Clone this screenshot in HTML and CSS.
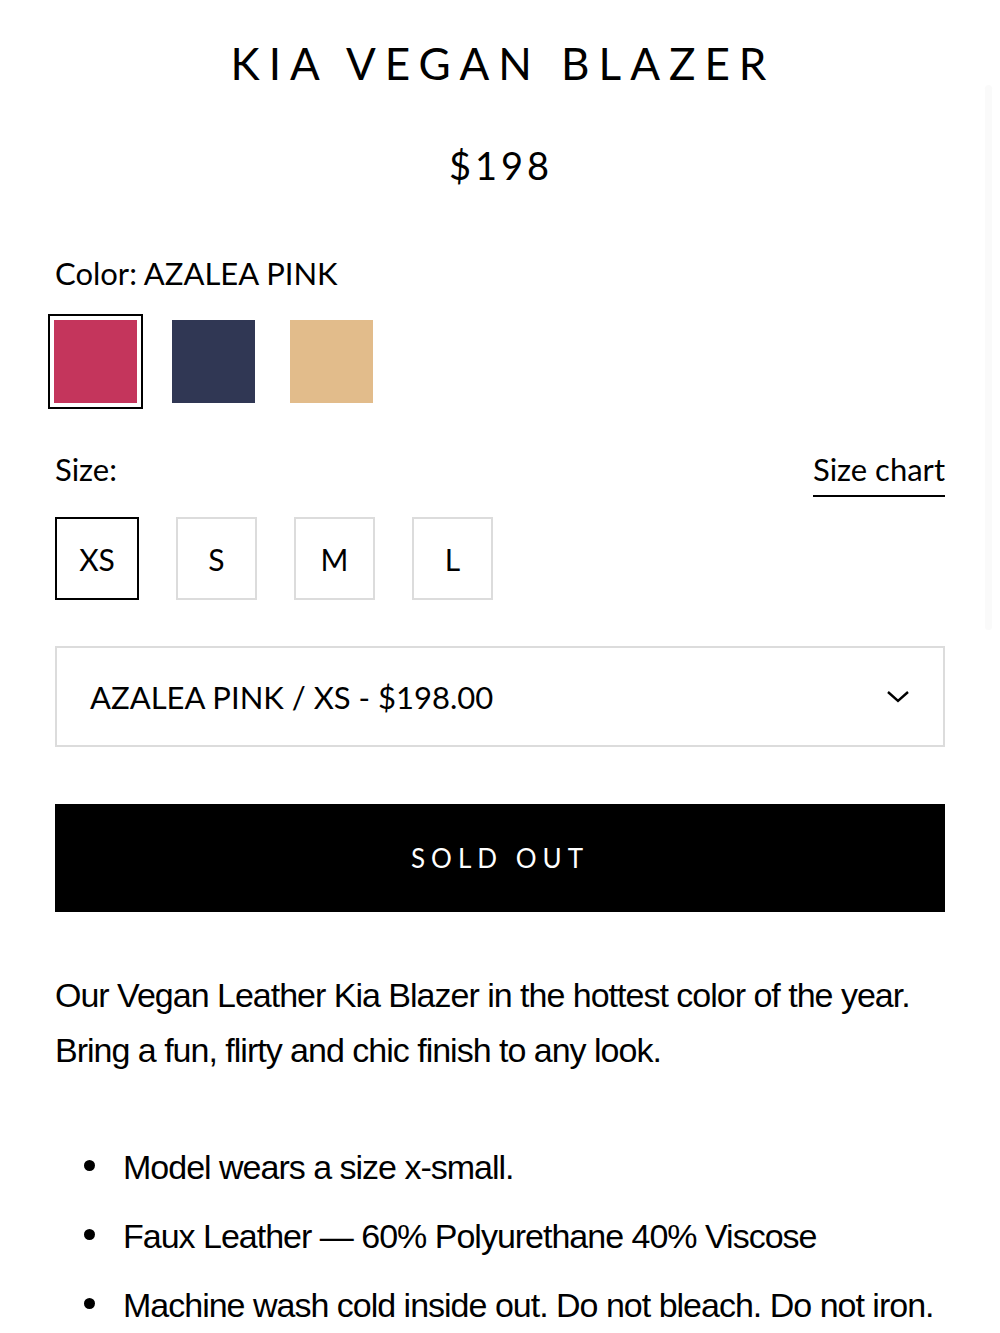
FILE: index.html
```html
<!DOCTYPE html>
<html lang="en">
<head>
    <meta charset="UTF-8">
    <meta name="viewport" content="width=device-width, initial-scale=1.0">
    <title>Kia Vegan Blazer</title>
    <link rel="stylesheet" href="styles.css">
</head>
<body>

    <div class="product">
        <h1 class="product-title">KIA VEGAN BLAZER</h1>
        <p class="product-price">$198</p>

        <!-- Couleur -->
        <div class="option">
            <div class="option-label">Color: <span>AZALEA PINK</span></div>
            <div class="swatches">
                <span class="swatch selected"><span class="swatch-color pink"></span></span>
                <span class="swatch"><span class="swatch-color navy"></span></span>
                <span class="swatch"><span class="swatch-color nude"></span></span>
            </div>
        </div>

        <!-- Taille -->
        <div class="option option-size">
            <div class="option-head">
                <div class="option-label">Size:</div>
                <a href="#" class="size-chart">Size chart</a>
            </div>
            <div class="sizes">
                <button class="size selected">XS</button>
                <button class="size">S</button>
                <button class="size">M</button>
                <button class="size">L</button>
            </div>
        </div>

        <div class="variant-select">
            <span>AZALEA PINK / XS - $198.00</span>
            <svg width="24" height="14" viewBox="0 0 24 14" fill="none" stroke="#000" stroke-width="2.4">
                <polyline points="2,2 12,11 22,2"/>
            </svg>
        </div>

        <button class="sold-out">SOLD OUT</button>

        <div class="description">
            <p>Our Vegan Leather Kia Blazer in the hottest color of the year. Bring a fun, flirty and chic finish to any look.</p>
            <ul>
                <li>Model wears a size x-small.</li>
                <li>Faux Leather — 60% Polyurethane 40% Viscose</li>
                <li>Machine wash cold inside out. Do not bleach. Do not iron.</li>
            </ul>
        </div>
    </div>

    <div class="scroll-hint"></div>

</body>
</html>
```

FILE: styles.css
```css
* {
    margin: 0;
    padding: 0;
    box-sizing: border-box;
}

body {
    font-family: Lato, "Open Sans", sans-serif;
    color: #000;
    background-color: #fff;
}

.product {
    padding: 0 55px;
}

.product-title {
    text-align: center;
    font-size: 44px;
    font-weight: 400;
    letter-spacing: 9px;
    line-height: 56px;
    padding-top: 35px;
    padding-left: 6px;
}

.product-price {
    text-align: center;
    font-size: 38px;
    letter-spacing: 4px;
    line-height: 46px;
    margin-top: 51px;
    padding-left: 2px;
}

.option {
    margin-top: 65px;
}

.option-size {
    margin-top: 40px;
}

.option-label {
    font-size: 31px;
    line-height: 40px;
}

.option-head {
    display: flex;
    justify-content: space-between;
    align-items: flex-start;
}

.size-chart {
    font-size: 31px;
    line-height: 40px;
    color: #000;
    text-decoration: none;
    border-bottom: 2px solid #000;
    padding-bottom: 6px;
}

.swatches {
    display: flex;
    gap: 23px;
    margin-top: 21px;
    margin-left: -7px;
}

.swatch {
    display: block;
    padding: 4px;
    border: 2px solid transparent;
}

.swatch.selected {
    border-color: #000;
}

.swatch-color {
    display: block;
    width: 83px;
    height: 83px;
}

.pink {
    background-color: #c4355c;
}

.navy {
    background-color: #303754;
}

.nude {
    background-color: #e2bc8b;
}

.sizes {
    display: flex;
    gap: 37px;
    margin-top: 20px;
}

.size {
    width: 81px;
    height: 83px;
    background: #fff;
    border: 2px solid #dcdcdc;
    font-family: Lato, "Open Sans", sans-serif;
    font-size: 30px;
    color: #000;
}

.size.selected {
    width: 84px;
    border-color: #000;
}

.variant-select {
    display: flex;
    justify-content: space-between;
    align-items: center;
    height: 101px;
    margin-top: 46px;
    padding: 0 33px 0 33px;
    border: 2px solid #dcdcdc;
    font-size: 31px;
}

.sold-out {
    display: block;
    width: 100%;
    height: 108px;
    margin-top: 57px;
    background-color: #000;
    color: #fff;
    border: none;
    font-family: Lato, "Open Sans", sans-serif;
    font-size: 26px;
    letter-spacing: 6px;
}

.description {
    margin-top: 56px;
    font-family: "Liberation Sans", Arial, sans-serif;
    font-size: 34px;
    letter-spacing: -1px;
    line-height: 55px;
}

.description ul {
    list-style: none;
    margin-top: 55px;
    padding-left: 68px;
}

.description li {
    position: relative;
    line-height: 69px;
}

.description li::before {
    content: "";
    position: absolute;
    left: -39px;
    top: 27px;
    width: 11px;
    height: 11px;
    border-radius: 50%;
    background-color: #000;
}

.scroll-hint {
    position: absolute;
    top: 85px;
    left: 985px;
    width: 7px;
    height: 545px;
    border-radius: 4px;
    background-color: #fafafa;
}
```
